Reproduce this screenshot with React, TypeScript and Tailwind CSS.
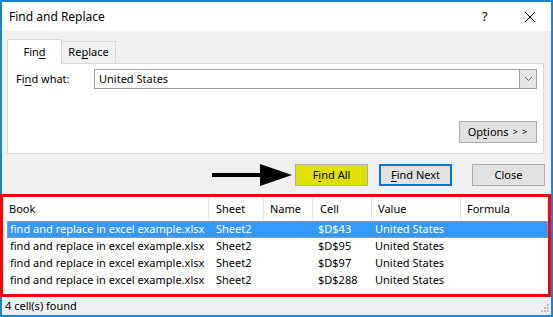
import React from "react";

const cols = [
  { label: "Book", head: "w-[206px] pl-[6px]", cell: "w-[202px] pl-[2px]" },
  { label: "Sheet", head: "w-[55px] pl-[7px]", cell: "w-[55px] pl-[7px]" },
  { label: "Name", head: "w-[49px] pl-[6px]", cell: "w-[49px] pl-[6px]" },
  { label: "Cell", head: "w-[59px] pl-[7px]", cell: "w-[59px] pl-[7px]" },
  { label: "Value", head: "w-[89px] pl-[6px]", cell: "w-[89px] pl-[6px]" },
  { label: "Formula", head: "w-[87px] pl-[6px]", cell: "w-[87px] pl-[6px]" },
];

const rows = [
  ["find and replace in excel example.xlsx", "Sheet2", "", "$D$43", "United States", ""],
  ["find and replace in excel example.xlsx", "Sheet2", "", "$D$95", "United States", ""],
  ["find and replace in excel example.xlsx", "Sheet2", "", "$D$97", "United States", ""],
  ["find and replace in excel example.xlsx", "Sheet2", "", "$D$288", "United States", ""],
];

const U = ({ children }: { children: React.ReactNode }) => (
  <span className="underline underline-offset-[2px]">{children}</span>
);

export default function App() {
  return (
    <div className="w-[553px] h-[317px] flex flex-col bg-[#f0f0f0] text-[11px] text-black font-['Noto_Sans',sans-serif] overflow-hidden">
      {/* window top part */}
      <div className="flex flex-col border-t-2 border-x-2 border-[#1883d7]">
        <div className="h-[29px] bg-white flex items-center pl-[7px] relative">
          <span className="text-[12px]">Find and Replace</span>
          <span className="absolute left-[480px] top-[5px] text-[13px]">?</span>
          <svg className="absolute left-[522px] top-[9px]" width="12" height="12" viewBox="0 0 12 12">
            <path d="M1 1 L11 11 M11 1 L1 11" stroke="#000" strokeWidth="1" />
          </svg>
        </div>

        {/* tabs */}
        <div className="flex items-end pl-[5px] mt-[7px] h-[25px]">
          <div className="h-[25px] w-[55px] bg-white border-t border-x border-[#d9d9d9] flex items-center justify-center -mb-px relative z-10">
            Fin<U>d</U>
          </div>
          <div className="h-[22px] w-[54px] bg-[#f0f0f0] border-t border-r border-[#d9d9d9] flex items-center justify-center">
            Re<U>p</U>lace
          </div>
        </div>

        {/* panel */}
        <div className="ml-[5px] w-[537px] h-[91px] bg-white border border-[#d9d9d9] flex flex-col">
          <div className="flex items-center mt-[5px]">
            <span className="w-[86px] pl-[8px]">
              Fi<U>n</U>d what:
            </span>
            <div className="w-[443px] h-[20px] border border-[#a0a0a0] flex items-center">
              <span className="flex-1 pl-[4px]">United States</span>
              <div className="w-[17px] h-[18px] bg-[#e5e5e5] border-l border-[#a0a0a0] flex items-center justify-center">
                <svg width="9" height="6" viewBox="0 0 9 6">
                  <path d="M1 1 L4.5 4.5 L8 1" stroke="#606060" fill="none" strokeWidth="1" />
                </svg>
              </div>
            </div>
          </div>
          <div className="flex justify-end pr-[6px] mt-[32px]">
            <div className="w-[78px] h-[22px] bg-[#e1e1e1] border border-[#adadad] flex items-center justify-center">
              Op<U>t</U>ions <span className="ml-[4px] text-[9px] tracking-[1px]">&gt; &gt;</span>
            </div>
          </div>
        </div>

        {/* buttons */}
        <div className="flex items-center h-[22px] mt-[10px] mb-[8px]">
          <svg className="ml-[210px]" width="80" height="22" viewBox="0 0 80 22">
            <rect x="0" y="9" width="50" height="4" fill="#000" />
            <path d="M48 0 L80 11 L48 22 Z" fill="#000" />
          </svg>
          <div className="ml-[3px] w-[73px] h-[22px] bg-[#e0e000] border border-[#adadad] flex items-center justify-center">
            F<U>i</U>nd All
          </div>
          <div className="ml-[11px] w-[73px] h-[22px] bg-[#e1e1e1] border-2 border-[#0078d7] flex items-center justify-center">
            <U>F</U>ind Next
          </div>
          <div className="ml-[20px] w-[73px] h-[22px] bg-[#e1e1e1] border border-[#adadad] flex items-center justify-center">
            Close
          </div>
        </div>
      </div>

      {/* results list */}
      <div className="border-r-2 border-[#1883d7]">
        <div className="h-[103px] border-[3px] border-[#ff0000] bg-white flex flex-col">
          <div className="flex h-[24px] items-center">
            {cols.map((c) => (
              <div key={c.label} className={`${c.head} h-full flex items-center border-r border-[#e5e5e5]`}>
                {c.label}
              </div>
            ))}
          </div>
          <div className="flex flex-col ml-[4px]">
            {rows.map((r, i) => (
              <div
                key={i}
                className={
                  i === 0
                    ? "flex h-[17px] items-center bg-[#3399ff] text-white border border-dotted border-[#e89a50]"
                    : "flex h-[17px] items-center border border-transparent"
                }
              >
                {r.map((v, j) => (
                  <div key={j} className={`${cols[j].cell} whitespace-nowrap -ml-px first:ml-0`}>
                    {v}
                  </div>
                ))}
              </div>
            ))}
          </div>
        </div>
      </div>

      {/* status bar */}
      <div className="flex-1 relative flex items-center pl-[3px] border-x-2 border-b-2 border-[#1883d7]">
        <span>4 cell(s) found</span>
        <svg className="absolute right-[1px] bottom-[2px]" width="9" height="9" viewBox="0 0 9 9">
          <rect x="6" y="0" width="2" height="2" fill="#bcbcbc" />
          <rect x="3" y="3" width="2" height="2" fill="#bcbcbc" />
          <rect x="6" y="3" width="2" height="2" fill="#bcbcbc" />
          <rect x="0" y="6" width="2" height="2" fill="#bcbcbc" />
          <rect x="3" y="6" width="2" height="2" fill="#bcbcbc" />
          <rect x="6" y="6" width="2" height="2" fill="#bcbcbc" />
        </svg>
      </div>
    </div>
  );
}
